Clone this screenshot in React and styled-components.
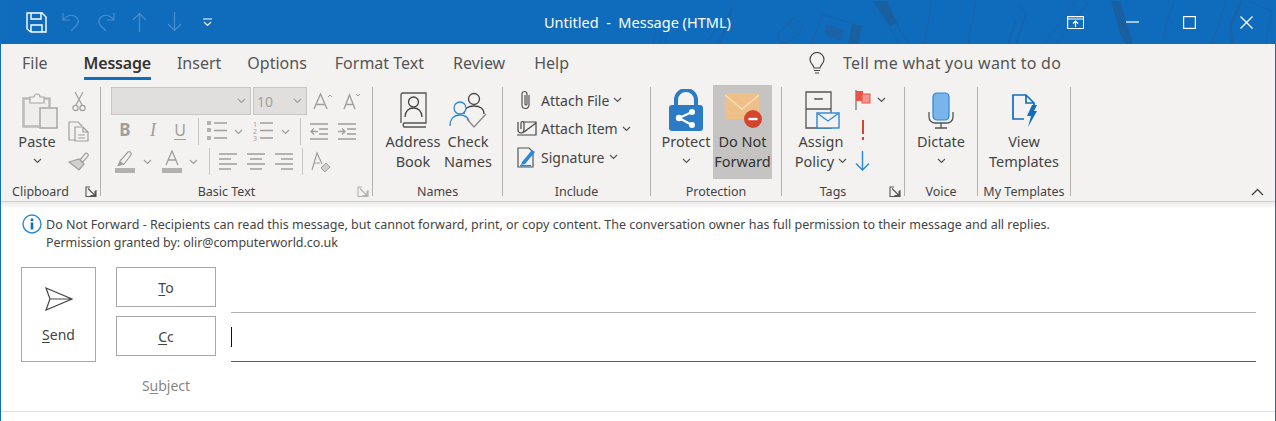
import React from 'react'
import styled, { createGlobalStyle } from 'styled-components'

const BLUE = '#106ebe'

const Global = createGlobalStyle`
html, body { margin:0; padding:0; background:#fff; }
body { font-family:"Noto Sans","Open Sans",sans-serif; color:#444; }
`

const Svg = ({ w, h, children, ...rest }) => (
    <svg width={w} height={h} viewBox={`0 0 ${w} ${h}`} fill="none" style={{ display: 'block' }} {...rest}>{children}</svg>
)

const Chevron = ({ color = '#555' }) => (
    <Svg w={9} h={6}><path d="M1 1l3.5 3.5L8 1" stroke={color} strokeWidth="1.2" /></Svg>
)

const TitlePattern = () => (
    <PatternLayer width="1276" height="44" viewBox="0 0 1276 44" fill="none" stroke="#1c62a6" strokeWidth="1">
        <path d="M656 32l-3 12M662 32l-3 12M668 32l-3 12" />
        <path d="M733 8l-28 36M733 8l-13 36M727 25l-10 19" />
        <path d="M778 34l15-16 10 7-3 8-13 10-7-1zM788 24l12 12" />
        <path d="M812 44l10-30 39 12-3 18" />
        <path d="M827 25l16 5-2 10-16-5z" fill="#1c62a6" />
        <path d="M852 24l10 2-4 18h-10z" fill="#1a5f9f" stroke="none" />
        <path d="M873 1h14l10 21-7 5z" fill="#1a5f9f" stroke="none" />
        <path d="M890 27l7-5 3 9 10 13M890 27l9 17" />
        <path d="M932 2l-8 42M976 2l-8 42M1018 4l8 10-10 30M1016 20l-8 24" />
        <path d="M1076 1l-32 43M1089 1l-33 43" />
        <path d="M1111 1h9l13 43h-7l-7-12-3-14z" fill="#1a5f9f" stroke="none" />
        <path d="M1174 1l-10 29 2 14M1226 1l-14 43" />
        <path d="M1241 1l-11 27 3 16" strokeWidth="2.500" />
        <path d="M1250 1l22 11-6 32" />
    </PatternLayer>
)

const SaveIcon = () => (
    <Svg w={21} h={21}>
        <path d="M1 1h15l4 4v15H5l-4-3z" stroke="#fff" strokeWidth="1.4" />
        <path d="M5 1v6h10V1M5 20v-7h11v7" stroke="#fff" strokeWidth="1.4" />
    </Svg>
)

const Undo = ({ flip }) => (
    <Svg w={18} h={20} style={{ display: 'block', transform: flip ? 'scaleX(-1)' : 'none' }}>
        <path d="M1 1v7h7M1 8c4-5 9-6 13-3 3 3 3 6 0 9l-5 5" stroke="#4a8dcb" strokeWidth="1.2" />
    </Svg>
)

const Updown = ({ down }) => (
    <Svg w={15} h={20} style={{ display: 'block', transform: down ? 'scaleY(-1)' : 'none' }}>
        <path d="M7.5 20V2M1 8l6.5-6.500L14 8" stroke="#4a8dcb" strokeWidth="1.2" />
    </Svg>
)

const PasteIcon = () => (
    <Svg w={36} h={38}>
        <rect x="1.500" y="7.500" width="26" height="28" fill="#efeeed" stroke="#bdbbb9" strokeWidth="2.500" />
        <path d="M8 12V6h4a3 3 0 0 1 6 0h4v6z" fill="#f3f2f1" stroke="#a8a6a4" strokeWidth="1.200" />
        <rect x="17" y="16" width="19" height="22" fill="#f3f2f1" />
        <rect x="18" y="17" width="17" height="20" fill="#eeedec" stroke="#a8a6a4" strokeWidth="1.500" />
    </Svg>
)

const CutIcon = () => (
    <Svg w={14} h={21} stroke="#a19f9d" strokeWidth="1.200">
        <path d="M3 1l7 13M11 1L4 14" />
        <circle cx="3.500" cy="17" r="2.600" /><circle cx="10.500" cy="17" r="2.600" />
    </Svg>
)

const CopyIcon = () => (
    <Svg w={21} h={21} stroke="#a19f9d" strokeWidth="1.200">
        <path d="M7 19H1V1h9l4 4" />
        <path d="M7 6h8l5 5v9H7zM15 6v5h5M10 14h7M10 17h7" />
    </Svg>
)

const BrushIcon = () => (
    <Svg w={21} h={20} stroke="#a19f9d" strokeWidth="1.200">
        <path d="M12 9l5-6c1-2 4 0 3 2l-5 6z" />
        <path d="M1 11l10-3 5 5-5 6z" fill="#d2d0ce" />
    </Svg>
)

const Launcher = ({ dim }) => (
    <Svg w={12} h={11} stroke={dim ? '#b3b0ad' : '#555'} strokeWidth="1.100">
        <path d="M11 4v6.500H1V1h4M3 2.500l7 7M5.500 9.500H10V5" />
    </Svg>
)

const BulletIcon = ({ numbered }) => (
    <Svg w={20} h={22}>
        {numbered
            ? <g fill="#a19f9d" fontSize="7" fontFamily="Noto Sans"><text x="0" y="6">1</text><text x="0" y="13">2</text><text x="0" y="20">3</text></g>
            : <g fill="#b3b0ad"><rect y="0" width="4" height="4" /><rect y="7" width="4" height="4" /><rect y="15" width="4" height="4" /></g>}
        <path d="M7 2h13M7 9.500h13M7 17h13" stroke="#a19f9d" strokeWidth="1.300" />
    </Svg>
)

const IndentIcon = ({ out }) => (
    <Svg w={18} h={18} stroke="#a19f9d" strokeWidth="1.300">
        <path d="M0 1h18M9 6h9M9 11h9M0 16h18" />
        {out ? <path d="M8 8.500H1M4 5.500l-3 3 3 3" /> : <path d="M0 8.500h7M4 5.500l3 3-3 3" />}
    </Svg>
)

const AlignIcon = ({ mode }) => {
    const rows = { left: ['M0 1h18', 'M0 6h12', 'M0 11h18', 'M0 16h12'], center: ['M0 1h18', 'M3 6h12', 'M0 11h18', 'M3 16h12'], right: ['M0 1h18', 'M6 6h12', 'M0 11h18', 'M6 16h12'] }
    return <Svg w={18} h={18} stroke="#a19f9d" strokeWidth="1.300"><path d={rows[mode].join('')} /></Svg>
}

const HighlightIcon = () => (
    <Svg w={20} h={23}>
        <path d="M5 11l8-9c2-1 4 1 3 3l-7 9-5 1z" stroke="#a19f9d" strokeWidth="1.200" />
        <path d="M5 11l4 3-5 2H2z" fill="#a19f9d" />
        <rect y="18" width="20" height="5" fill="#b3b0ad" />
    </Svg>
)

const FontColorIcon = () => (
    <Svg w={20} h={23}>
        <path d="M4 15L10 1l6 14M6 10h8" stroke="#a19f9d" strokeWidth="1.300" />
        <rect y="18" width="20" height="5" fill="#b3b0ad" />
    </Svg>
)

const GrowIcon = ({ shrink }) => (
    <Svg w={shrink ? 18 : 20} h={17} stroke="#a19f9d">
        <path d={shrink ? 'M1 16L6.500 2 12 16M3 11.500h7' : 'M1 16L7.500 1 14 16M3 11.500h9'} strokeWidth="1.400" />
        <path d={shrink ? 'M13 1l2 2 2-2' : 'M15 4l2-2 2 2'} strokeWidth="1" />
    </Svg>
)

const ClearIcon = () => (
    <Svg w={20} h={22}>
        <path d="M1 19L6 2l5 11M3 12h6" stroke="#a19f9d" strokeWidth="1.200" />
        <path d="M10 17l5-5 4 4-5 5z" fill="#d2d0ce" stroke="#a19f9d" />
    </Svg>
)

const BookIcon = () => (
    <Svg w={27} h={36}>
        <path d="M1 31V3a2 2 0 0 1 2-2h23v30H4a3 3 0 0 0 0 4h22" stroke="#555" strokeWidth="1.300" />
        <circle cx="13.500" cy="10" r="5" stroke="#444" strokeWidth="1.300" />
        <path d="M5 25c0-6 4-9 8.500-9s8.500 3 8.500 9" stroke="#444" strokeWidth="1.300" />
    </Svg>
)

const CheckNamesIcon = () => (
    <Svg w={38} h={36}>
        <circle cx="25" cy="7" r="5.500" stroke="#444" strokeWidth="1.300" />
        <path d="M15 22c0-5 4-8 10-8s10 3 10 8" stroke="#444" strokeWidth="1.300" />
        <circle cx="11" cy="16" r="6" fill="#f3f2f1" stroke="#2b88d8" strokeWidth="1.300" />
        <path d="M1 34c0-7 4-11 10-11s8 3 9 6" fill="#f3f2f1" stroke="#2b88d8" strokeWidth="1.300" />
        <path d="M18 27l7 8 12-13" stroke="#888" strokeWidth="1.300" />
    </Svg>
)

const ClipIcon = () => (
    <Svg w={12} h={20}>
        <path d="M9 5v10a3.500 3.500 0 0 1-7 0V4a2.500 2.500 0 0 1 5 0v10a1 1 0 0 1-2 0V5" stroke="#555" strokeWidth="1.200" />
    </Svg>
)

const AttachItemIcon = () => (
    <Svg w={21} h={17}>
        <path d="M7 2h13v13H1" stroke="#444" strokeWidth="1.200" />
        <path d="M8 12L20 3" stroke="#444" strokeWidth="1.200" />
        <path d="M5 9V3a1.500 1.500 0 0 1 3 0v7a3 3 0 0 1-6 0V2" stroke="#444" strokeWidth="1.200" />
    </Svg>
)

const SignatureIcon = () => (
    <Svg w={19} h={21}>
        <path d="M1 1h11l4 4v15H1z" stroke="#555" strokeWidth="1.200" />
        <path d="M5 15L15 3l3 2L8 17l-4 1z" fill="#2b88d8" />
        <rect x="3" y="18" width="11" height="1.500" fill="#2b88d8" />
    </Svg>
)

const LockIcon = () => (
    <Svg w={34} h={42}>
        <path d="M7 18V11a10 10 0 0 1 20 0v7" stroke="#2b7cc4" strokeWidth="4" />
        <rect x="0" y="16" width="34" height="26" rx="3" fill="#2b7cc4" />
        <path d="M10 29l13-6M10 29l13 7" stroke="#fff" strokeWidth="2.200" />
        <circle cx="10" cy="29" r="3.200" fill="#fff" /><circle cx="23" cy="23" r="3" fill="#fff" /><circle cx="23" cy="36" r="3" fill="#fff" />
    </Svg>
)

const NoForwardIcon = () => (
    <Svg w={38} h={36}>
        <rect x="1" y="1" width="34" height="26" fill="#eec087" />
        <path d="M1 3l17 14L35 3" stroke="#f7dcb9" strokeWidth="1.600" />
        <circle cx="29" cy="27" r="9" fill="#d4452f" />
        <rect x="24.500" y="25.800" width="9" height="2.400" fill="#fff" />
    </Svg>
)

const PolicyIcon = () => (
    <Svg w={35} h={38}>
        <path d="M1 1h25v36H1zM1 18h25M10 7v1h7V7" stroke="#555" strokeWidth="1.300" />
        <rect x="12" y="22" width="22" height="15" fill="#f3f2f1" stroke="#2b88d8" strokeWidth="1.400" />
        <path d="M12 22l11 8 11-8" stroke="#2b88d8" strokeWidth="1.300" />
    </Svg>
)

const FlagIcon = () => (
    <Svg w={16} h={20}>
        <path d="M1 0v20" stroke="#777" strokeWidth="1.300" />
        <rect x="1" y="1" width="7" height="10" fill="#e8544a" />
        <rect x="7" y="4" width="8" height="9" fill="#f2958c" stroke="#e8544a" />
    </Svg>
)

const MicIcon = () => (
    <Svg w={26} h={37}>
        <rect x="5" y="1" width="16" height="27" rx="4" fill="#79b4ea" stroke="#2b88d8" strokeWidth="1.200" />
        <path d="M1 20v5a6 6 0 0 0 6 6h12a6 6 0 0 0 6-6v-5M13 31v5M7 36h12" stroke="#555" strokeWidth="1.300" />
    </Svg>
)

const TemplatesIcon = () => (
    <Svg w={25} h={33}>
        <path d="M12 25H1V1h13l8 8v4M14 1v8h8" stroke="#106ebe" strokeWidth="1.700" />
        <path d="M20 11h5l-3 6h3l-9 16 3-11h-4z" fill="#106ebe" />
    </Svg>
)

const BulbIcon = () => (
    <Svg w={16} h={22}>
        <path d="M5 16c0-3-4-4-4-8.500a7 7 0 0 1 14 0C15 12 11 13 11 16z" stroke="#444" strokeWidth="1.200" />
        <path d="M5 18.500h6M6 21h4" stroke="#444" strokeWidth="1.200" />
    </Svg>
)

const SendIcon = () => (
    <Svg w={28} h={24}>
        <path d="M1 1l26 11L1 23l4-11zM5 12h22" stroke="#444" strokeWidth="1.200" />
    </Svg>
)

const InfoIcon = () => (
    <Svg w={20} h={20}>
        <circle cx="10" cy="10" r="9" stroke="#2b88d8" strokeWidth="1.400" />
        <rect x="8.700" y="8.500" width="2.600" height="7" fill="#106ebe" />
        <rect x="8.700" y="4.500" width="2.600" height="2.600" fill="#106ebe" />
    </Svg>
)

const Group = ({ w, label, launcher, dim, children }) => (
    <GroupBox $w={w}>
        <GroupBody>{children}</GroupBody>
        <GroupFooter>
            <GroupLabel $shift={launcher}>{label}</GroupLabel>
            {launcher && <LauncherSlot><Launcher dim={dim} /></LauncherSlot>}
        </GroupFooter>
    </GroupBox>
)

const App = () => {
    return (
        <Page>
            <Global />
            <TitleBar>
                <TitlePattern />
                <QuickAccess>
                    <SaveIcon />
                    <QuickSlot $ml={15}><Undo /></QuickSlot>
                    <QuickSlot $ml={17}><Undo flip /></QuickSlot>
                    <QuickSlot $ml={17}><Updown /></QuickSlot>
                    <QuickSlot $ml={20}><Updown down /></QuickSlot>
                    <QuickSlot $ml={21}>
                        <Svg w={9} h={9}><path d="M0 1h9M1 4l3.500 3.500L8 4" stroke="#fff" strokeWidth="1.200" /></Svg>
                    </QuickSlot>
                </QuickAccess>
                <WindowTitle>Untitled&nbsp; -&nbsp; Message (HTML)</WindowTitle>
                <WindowControls>
                    <WindowButton>
                        <Svg w={17} h={13} stroke="#fff" strokeWidth="1.200"><path d="M.6.600h16v12H.6zM.6 3h16M8.500 11V5M6 7.500L8.500 5 11 7.500" /></Svg>
                    </WindowButton>
                    <WindowButton><Svg w={13} h={2}><path d="M0 1h13" stroke="#fff" strokeWidth="1.200" /></Svg></WindowButton>
                    <WindowButton><Svg w={13} h={13}><rect x=".6" y=".6" width="11.800" height="11.800" stroke="#fff" strokeWidth="1.200" /></Svg></WindowButton>
                    <WindowButton><Svg w={13} h={13}><path d="M.5.500l12 12M12.500.500l-12 12" stroke="#fff" strokeWidth="1.300" /></Svg></WindowButton>
                </WindowControls>
            </TitleBar>

            <TabRow>
                <Tab>File</Tab>
                <Tab $active $ml={36}>Message</Tab>
                <Tab $ml={26}>Insert</Tab>
                <Tab $ml={26}>Options</Tab>
                <Tab $ml={28}>Format Text</Tab>
                <Tab $ml={29}>Review</Tab>
                <Tab $ml={29}>Help</Tab>
                <TellMe><BulbIcon /><span>Tell me what you want to do</span></TellMe>
            </TabRow>

            <Ribbon>
                <Group w={100} label="Clipboard" launcher>
                    <LargeButton $w={72} $dim>
                        <IconArea><PasteSlot><PasteIcon /></PasteSlot></IconArea>
                        <span>Paste</span>
                        <ChevronLine><Chevron /></ChevronLine>
                    </LargeButton>
                    <SmallColumn>
                        <CutIcon /><CopyIcon /><BrushIcon />
                    </SmallColumn>
                </Group>

                <Group w={272} label="Basic Text" launcher dim>
                    <BasicText>
                        <FontRow>
                            <FontSelect $w={140}><Chevron color="#a19f9d" /></FontSelect>
                            <FontSelect $w={54} $ml={2}><SizeValue>10</SizeValue><Chevron color="#a19f9d" /></FontSelect>
                            <Tool $w={20} $ml={6}><GrowIcon /></Tool>
                            <Tool $w={18} $ml={10}><GrowIcon shrink /></Tool>
                        </FontRow>
                        <ToolRow>
                            <Tool $w={14} $ml={3}><BoldGlyph>B</BoldGlyph></Tool>
                            <Tool $w={14} $ml={14}><ItalicGlyph>I</ItalicGlyph></Tool>
                            <Tool $w={14} $ml={13}><UnderGlyph>U</UnderGlyph></Tool>
                            <ToolSep $ml={11} />
                            <Tool $w={20} $ml={8}><BulletIcon /></Tool>
                            <Tool $w={9} $ml={7}><Chevron color="#a19f9d" /></Tool>
                            <Tool $w={20} $ml={10}><BulletIcon numbered /></Tool>
                            <Tool $w={9} $ml={8}><Chevron color="#a19f9d" /></Tool>
                            <ToolSep $ml={10} />
                            <Tool $w={18} $ml={9}><IndentIcon out /></Tool>
                            <Tool $w={18} $ml={10}><IndentIcon /></Tool>
                        </ToolRow>
                        <ToolRow>
                            <Tool $w={20}><HighlightIcon /></Tool>
                            <Tool $w={9} $ml={8}><Chevron color="#a19f9d" /></Tool>
                            <Tool $w={20} $ml={10}><FontColorIcon /></Tool>
                            <Tool $w={9} $ml={7}><Chevron color="#a19f9d" /></Tool>
                            <ToolSep $ml={11} />
                            <Tool $w={18} $ml={9}><AlignIcon mode="left" /></Tool>
                            <Tool $w={18} $ml={10}><AlignIcon mode="center" /></Tool>
                            <Tool $w={18} $ml={10}><AlignIcon mode="right" /></Tool>
                            <ToolSep $ml={9} />
                            <Tool $w={20} $ml={8}><ClearIcon /></Tool>
                        </ToolRow>
                    </BasicText>
                </Group>

                <Group w={130} label="Names">
                    <LargeButton $w={64} $ml={8}>
                        <IconArea><BookIcon /></IconArea>
                        <span>Address</span>
                        <span>Book</span>
                    </LargeButton>
                    <LargeButton $w={54} $ml={-4}>
                        <IconArea><CheckNamesIcon /></IconArea>
                        <span>Check</span>
                        <span>Names</span>
                    </LargeButton>
                </Group>

                <Group w={148} label="Include">
                    <IncludeList>
                        <IncludeRow><IncludeIcon><ClipIcon /></IncludeIcon>Attach File <Chevron /></IncludeRow>
                        <IncludeRow><IncludeIcon><AttachItemIcon /></IncludeIcon>Attach Item <Chevron /></IncludeRow>
                        <IncludeRow><IncludeIcon><SignatureIcon /></IncludeIcon>Signature <Chevron /></IncludeRow>
                    </IncludeList>
                </Group>

                <Group w={131} label="Protection">
                    <LargeButton $w={52} $ml={9}>
                        <IconArea><LockIcon /></IconArea>
                        <span>Protect</span>
                        <ChevronLine><Chevron /></ChevronLine>
                    </LargeButton>
                    <HighlightButton>
                        <IconArea><NoForwardIcon /></IconArea>
                        <span>Do Not</span>
                        <span>Forward</span>
                    </HighlightButton>
                </Group>

                <Group w={123} label="Tags" launcher>
                    <LargeButton $w={70} $ml={4}>
                        <IconArea><PolicySlot><PolicyIcon /></PolicySlot></IconArea>
                        <span>Assign</span>
                        <PolicyLine>Policy <Chevron /></PolicyLine>
                    </LargeButton>
                    <TagColumn>
                        <TagRow><FlagIcon /><Chevron /></TagRow>
                        <Exclaim>
                            <Svg w={4} h={21}><path d="M2 0v14M2 17v3" stroke="#d4452f" strokeWidth="2" /></Svg>
                        </Exclaim>
                        <Exclaim>
                            <Svg w={15} h={20}><path d="M7.500 0v19M1 12.500l6.500 6.500 6.500-6.500" stroke="#2b88d8" strokeWidth="1.400" /></Svg>
                        </Exclaim>
                    </TagColumn>
                </Group>

                <Group w={73} label="Voice">
                    <LargeButton $w={72}>
                        <IconArea><MicIcon /></IconArea>
                        <span>Dictate</span>
                        <ChevronLine><Chevron /></ChevronLine>
                    </LargeButton>
                </Group>

                <Group w={93} label="My Templates">
                    <LargeButton $w={92}>
                        <IconArea><TemplatesIcon /></IconArea>
                        <span>View</span>
                        <span>Templates</span>
                    </LargeButton>
                </Group>

                <Collapse>
                    <Svg w={13} h={8}><path d="M1 7l5.500-5.500L12 7" stroke="#444" strokeWidth="1.300" /></Svg>
                </Collapse>
            </Ribbon>
            <RibbonShadow />

            <Notice>
                <InfoIcon />
                <NoticeText>
                    <div>Do Not Forward - Recipients can read this message, but cannot forward, print, or copy content. The conversation owner has full permission to their message and all replies.</div>
                    <PermissionLine>Permission granted by: olir@computerworld.co.uk</PermissionLine>
                </NoticeText>
            </Notice>

            <Compose>
                <SendButton>
                    <SendIcon />
                    <SendLabel><u>S</u>end</SendLabel>
                </SendButton>
                <AddressColumn>
                    <AddressButton $mb={9}><u>T</u>o</AddressButton>
                    <AddressButton><u>C</u>c</AddressButton>
                    <SubjectLabel>S<u>u</u>bject</SubjectLabel>
                </AddressColumn>
                <Fields>
                    <Field $h={46} $line="#b3b0ad" />
                    <Field $h={49} $line={BLUE}><Caret /></Field>
                </Fields>
            </Compose>
            <BottomRule />
        </Page>
    )
}

export default App

const Page = styled.div`
position:relative;
width:1276px;
height:421px;
box-sizing:border-box;
border-left:1px solid ${BLUE};
border-right:1px solid ${BLUE};
background:#fff;
overflow:hidden;
display:flex;
flex-direction:column;
`;

const TitleBar = styled.div`
position:relative;
flex:none;
height:44px;
margin:0 -1px;
background:#0f6cbd;
display:flex;
align-items:center;
`;

const PatternLayer = styled.svg`
position:absolute;
left:0;
top:0;
`;

const QuickAccess = styled.div`
position:relative;
display:flex;
align-items:center;
padding-left:26px;
`;

const QuickSlot = styled.div`
margin-left:${p => p.$ml}px;
`;

const WindowTitle = styled.div`
position:absolute;
left:544px;
top:0;
line-height:44px;
color:#fff;
font-size:14.5px;
white-space:nowrap;
`;

const WindowControls = styled.div`
position:relative;
margin-left:auto;
display:flex;
align-items:center;
margin-right:1px;
`;

const WindowButton = styled.div`
width:57px;
display:flex;
justify-content:center;
`;

const TabRow = styled.div`
flex:none;
height:36px;
background:#f3f2f1;
display:flex;
padding-left:21px;
font-size:16px;
`;

const Tab = styled.div`
position:relative;
margin-left:${p => p.$ml || 0}px;
line-height:38px;
color:${p => p.$active ? '#333' : '#555'};
font-weight:${p => p.$active ? 600 : 400};
letter-spacing:${p => p.$active ? '-.2px' : '0'};
${p => p.$active && `
&::after{
    content:'';
    position:absolute;
    left:0;
    right:0;
    bottom:0;
    height:3px;
    background:${BLUE};
}
`}
`;

const TellMe = styled.div`
position:absolute;
left:808px;
top:52px;
display:flex;
align-items:center;
gap:18px;
line-height:22px;
letter-spacing:.26px;
color:#555;
`;

const Ribbon = styled.div`
position:relative;
flex:none;
height:122px;
box-sizing:border-box;
padding-top:7px;
background:#f3f2f1;
border-bottom:1px solid #d2d0ce;
display:flex;
align-items:flex-start;
`;

const GroupBox = styled.div`
width:${p => p.$w}px;
height:109px;
flex:none;
box-sizing:border-box;
border-right:1px solid #b3b0ad;
display:flex;
flex-direction:column;
`;

const GroupBody = styled.div`
flex:1;
display:flex;
min-height:0;
`;

const GroupFooter = styled.div`
height:19px;
box-sizing:border-box;
padding-top:9px;
display:flex;
align-items:center;
font-size:12.500px;
color:#444;
`;

const GroupLabel = styled.div`
flex:1;
text-align:center;
white-space:nowrap;
padding-right:${p => p.$shift ? 5 : 0}px;
`;

const LauncherSlot = styled.div`
width:12px;
margin-right:3px;
`;

const LargeButton = styled.div`
width:${p => p.$w}px;
margin-left:${p => p.$ml || 0}px;
flex:none;
display:flex;
flex-direction:column;
align-items:center;
font-size:14.500px;
line-height:20px;
color:#444;
white-space:nowrap;
`;

const HighlightButton = styled(LargeButton)`
width:59px;
height:92px;
margin:-2px 0 0 1px;
padding-top:2px;
background:#c5c4c2;
color:#333;
`;

const IconArea = styled.div`
height:44px;
display:flex;
align-items:center;
justify-content:center;
padding-top:2px;
box-sizing:border-box;
`;

const PasteSlot = styled.div`
padding-left:6px;
`;

const PolicySlot = styled.div`
padding-left:2px;
`;

const ChevronLine = styled.div`
height:20px;
display:flex;
align-items:center;
`;

const SmallColumn = styled.div`
display:flex;
flex-direction:column;
align-items:center;
gap:9px;
width:21px;
margin-left:-5px;
padding-top:4px;
`;

const BasicText = styled.div`
padding-left:10px;
display:flex;
flex-direction:column;
`;

const FontRow = styled.div`
display:flex;
align-items:center;
height:28px;
margin-bottom:3px;
`;

const FontSelect = styled.div`
width:${p => p.$w}px;
height:28px;
margin-left:${p => p.$ml || 0}px;
box-sizing:border-box;
border:1px solid #c8c6c4;
background:#e1dfdd;
padding-right:4px;
display:flex;
align-items:center;
justify-content:flex-end;
`;

const SizeValue = styled.span`
margin-right:auto;
padding-left:3px;
font-size:14px;
color:#a19f9d;
`;

const ToolRow = styled.div`
display:flex;
align-items:center;
height:27px;
margin-bottom:3px;
padding-left:4px;
`;

const Tool = styled.div`
width:${p => p.$w}px;
margin-left:${p => p.$ml || 0}px;
flex:none;
display:flex;
justify-content:center;
align-items:center;
`;

const ToolSep = styled.div`
width:1px;
height:27px;
flex:none;
margin-left:${p => p.$ml}px;
background:#c8c6c4;
`;

const BoldGlyph = styled.span`
font-weight:700;
font-size:17px;
line-height:20px;
margin-top:-3px;
color:#a19f9d;
`;

const ItalicGlyph = styled.span`
font-family:"Liberation Serif",serif;
font-style:italic;
font-size:18px;
line-height:20px;
margin-top:-3px;
color:#a19f9d;
`;

const UnderGlyph = styled.span`
font-size:16px;
color:#a19f9d;
border-bottom:1px solid #a19f9d;
line-height:18px;
margin-top:-3px;
`;

const IncludeList = styled.div`
display:flex;
flex-direction:column;
margin-top:-1px;
padding:0 0 0 12px;
`;

const IncludeRow = styled.div`
height:28.500px;
display:flex;
align-items:center;
gap:4px;
font-size:14px;
color:#444;
white-space:nowrap;
`;

const IncludeIcon = styled.div`
width:22px;
display:flex;
justify-content:center;
`;

const PolicyLine = styled.span`
display:flex;
align-items:center;
gap:4px;
`;

const TagColumn = styled.div`
display:flex;
flex-direction:column;
padding:3px 0 0 0;
gap:10px;
margin-left:-2px;
`;

const TagRow = styled.div`
display:flex;
align-items:center;
gap:6px;
padding-left:1px;
`;

const Exclaim = styled.div`
width:15px;
margin-left:1px;
display:flex;
justify-content:center;
`;

const Collapse = styled.div`
position:absolute;
right:11px;
bottom:5px;
`;

const RibbonShadow = styled.div`
flex:none;
height:7px;
background:linear-gradient(#ecebea, #fff);
`;

const Notice = styled.div`
flex:none;
display:flex;
align-items:flex-start;
padding:5px 0 0 21px;
gap:4px;
height:47px;
box-sizing:border-box;
`;

const NoticeText = styled.div`
margin-top:2px;
font-size:12.500px;
line-height:18px;
color:#444;
white-space:nowrap;
`;

const PermissionLine = styled.div`
letter-spacing:-.06px;
`;

const Compose = styled.div`
flex:none;
display:flex;
align-items:flex-start;
padding:11px 19px 0 20px;
`;

const SendButton = styled.div`
width:75px;
height:95px;
flex:none;
box-sizing:border-box;
border:1px solid #aaa8a6;
display:flex;
flex-direction:column;
align-items:center;
padding-top:19px;
gap:14px;
`;

const SendLabel = styled.div`
font-size:14px;
line-height:20px;
color:#444;
u{ text-underline-offset:2px; }
`;

const AddressColumn = styled.div`
width:100px;
margin-left:20px;
flex:none;
display:flex;
flex-direction:column;
`;

const AddressButton = styled.div`
height:40px;
margin-bottom:${p => p.$mb || 0}px;
box-sizing:border-box;
border:1px solid #aaa8a6;
text-align:center;
line-height:39px;
font-size:14px;
color:#444;
u{ text-underline-offset:2px; }
`;

const SubjectLabel = styled.div`
margin-top:20px;
text-align:center;
font-size:14px;
line-height:20px;
color:#8a8886;
u{ text-underline-offset:2px; }
`;

const Fields = styled.div`
flex:1;
margin-left:15px;
display:flex;
flex-direction:column;
`;

const Field = styled.div`
height:${p => p.$h}px;
box-sizing:border-box;
border-bottom:1px solid ${p => p.$line};
display:flex;
align-items:center;
`;

const Caret = styled.div`
width:1px;
height:20px;
background:#111;
`;

const BottomRule = styled.div`
position:absolute;
left:0;
right:0;
bottom:9px;
height:1px;
background:#e1dfdd;
`;
